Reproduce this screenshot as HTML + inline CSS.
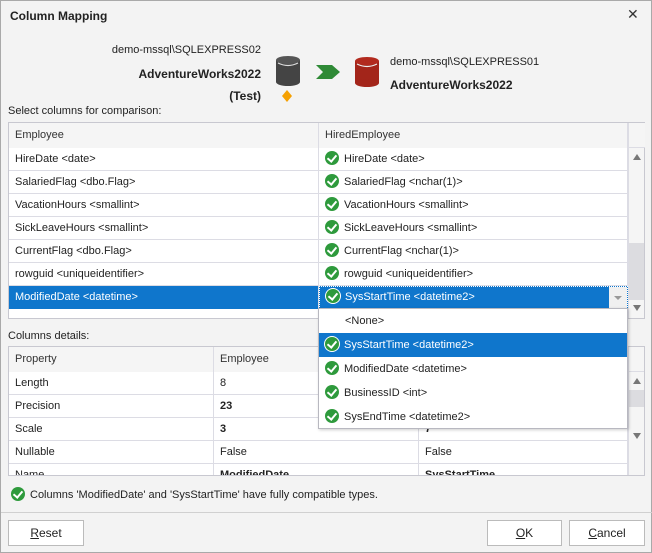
<!DOCTYPE html>
<html><head><style>
*{box-sizing:border-box;margin:0;padding:0}
body{width:652px;height:553px;background:#f0f0f0;font-family:"Liberation Sans",sans-serif;font-size:11px;color:#222;position:relative;overflow:hidden}
.win{position:absolute;left:0;top:0;width:652px;height:553px;border:1px solid #a9a9a9;background:#f3f3f3}
.a{position:absolute;white-space:nowrap}
.grid{position:absolute;background:#fff;border:1px solid #c8c8d0}
.row{position:absolute;left:0;height:23px;border-bottom:1px solid #dcdce4;width:100%}
.cell{position:absolute;top:0;height:23px;line-height:23px;padding-left:6px;border-right:1px solid #dcdce4;white-space:nowrap;overflow:hidden}
.hdr{background:#f5f5f5;height:25px;line-height:25px;color:#333}
.sel{background:#0f76cc;color:#fff}
.ck{display:inline-block;width:14px;height:14px;border-radius:50%;background:#2e9a3c;vertical-align:-3px;margin-right:5px;position:relative}
.ck:after{content:"";position:absolute;left:4px;top:2px;width:4px;height:7px;border:solid #fff;border-width:0 2px 2px 0;transform:rotate(40deg)}
.btn{position:absolute;height:26px;border:1px solid #bbb;background:#fff;text-align:center;line-height:24px;font-size:12px}
.sb{position:absolute;background:#f5f5f5}
.tri{position:absolute;width:0;height:0;border-left:4px solid transparent;border-right:4px solid transparent}
</style></head><body>
<div class="win">
<div class="a" style="left:9px;top:8px;font-weight:bold;font-size:12px">Column Mapping</div>
<div class="a" style="left:626px;top:5px;font-size:14px;color:#333">✕</div>

<div class="a" style="right:390px;top:43px">demo-mssql\SQLEXPRESS02</div>
<div class="a" style="right:390px;top:66px;font-weight:bold;font-size:12px">AdventureWorks2022</div>
<div class="a" style="right:390px;top:88px;font-weight:bold;font-size:12px">(Test)</div>
<svg class="a" style="left:274px;top:54px" width="26" height="32"><rect x="1" y="5" width="24" height="22" fill="#444"/><ellipse cx="13" cy="27" rx="12" ry="4" fill="#444"/><ellipse cx="13" cy="5" rx="12" ry="4" fill="#555"/><path d="M3 8Q13 13 23 8" stroke="#ddd" stroke-width="1.2" fill="none"/></svg>
<svg class="a" style="left:281px;top:89px" width="10" height="12"><path d="M5 0L10 6L5 12L0 6Z" fill="#f5a000"/></svg>
<svg class="a" style="left:315px;top:64px" width="24" height="14"><path d="M0 0H16L24 7L16 14H0L7 7Z" fill="#2f8a36"/></svg>
<svg class="a" style="left:353px;top:55px" width="26" height="32"><rect x="1" y="5" width="24" height="22" fill="#a3251a"/><ellipse cx="13" cy="27" rx="12" ry="4" fill="#a3251a"/><ellipse cx="13" cy="5" rx="12" ry="4" fill="#b22a1e"/><path d="M3 8Q13 13 23 8" stroke="#eee" stroke-width="1.2" fill="none"/></svg>
<div class="a" style="left:389px;top:55px">demo-mssql\SQLEXPRESS01</div>
<div class="a" style="left:389px;top:77px;font-weight:bold;font-size:12px">AdventureWorks2022</div>

<div class="a" style="left:7px;top:104px">Select columns for comparison:</div>
<div class="grid" style="left:7px;top:121px;width:637px;height:197px">
 <div class="row hdr" style="top:0"><div class="cell hdr" style="left:0;width:310px">Employee</div><div class="cell hdr" style="left:310px;width:309px">HiredEmployee</div></div>
 <div class="row" style="top:25px"><div class="cell" style="left:0;width:310px">HireDate &lt;date&gt;</div><div class="cell" style="left:310px;width:309px"><span class="ck"></span>HireDate &lt;date&gt;</div></div>
 <div class="row" style="top:48px"><div class="cell" style="left:0;width:310px">SalariedFlag &lt;dbo.Flag&gt;</div><div class="cell" style="left:310px;width:309px"><span class="ck"></span>SalariedFlag &lt;nchar(1)&gt;</div></div>
 <div class="row" style="top:71px"><div class="cell" style="left:0;width:310px">VacationHours &lt;smallint&gt;</div><div class="cell" style="left:310px;width:309px"><span class="ck"></span>VacationHours &lt;smallint&gt;</div></div>
 <div class="row" style="top:94px"><div class="cell" style="left:0;width:310px">SickLeaveHours &lt;smallint&gt;</div><div class="cell" style="left:310px;width:309px"><span class="ck"></span>SickLeaveHours &lt;smallint&gt;</div></div>
 <div class="row" style="top:117px"><div class="cell" style="left:0;width:310px">CurrentFlag &lt;dbo.Flag&gt;</div><div class="cell" style="left:310px;width:309px"><span class="ck"></span>CurrentFlag &lt;nchar(1)&gt;</div></div>
 <div class="row" style="top:140px"><div class="cell" style="left:0;width:310px">rowguid &lt;uniqueidentifier&gt;</div><div class="cell" style="left:310px;width:309px"><span class="ck"></span>rowguid &lt;uniqueidentifier&gt;</div></div>
 <div class="row" style="top:163px;border:0"><div class="cell sel" style="left:0;width:310px">ModifiedDate &lt;datetime&gt;</div><div class="cell sel" style="left:310px;width:309px;border:1px dotted #fff;line-height:21px"><span class="ck" style="box-shadow:0 0 0 1px #fff"></span>SysStartTime &lt;datetime2&gt;<div style="position:absolute;right:0;top:0;width:18px;height:21px;background:#f0f0f0"><div class="tri" style="left:5px;top:9px;border-top:4px solid #999"></div></div></div></div>
 <div class="sb" style="left:619px;top:0;width:16px;height:195px;border-left:1px solid #dcdce4"><div style="position:absolute;top:0;height:25px;width:16px;background:#f5f5f5;border-bottom:1px solid #dcdce4"></div><div class="tri" style="left:4px;top:31px;border-bottom:6px solid #777"></div><div style="position:absolute;top:120px;height:57px;width:15px;background:#dcdce0"></div><div class="tri" style="left:4px;top:182px;border-top:6px solid #777"></div></div>
</div>

<div class="a" style="left:7px;top:329px">Columns details:</div>
<div class="grid" style="left:7px;top:345px;width:637px;height:130px;overflow:hidden">
 <div class="row hdr" style="top:0"><div class="cell hdr" style="left:0;width:205px">Property</div><div class="cell hdr" style="left:205px;width:205px">Employee</div><div class="cell hdr" style="left:410px;width:209px"></div></div>
 <div class="row" style="top:25px"><div class="cell" style="left:0;width:205px">Length</div><div class="cell" style="left:205px;width:205px">8</div><div class="cell" style="left:410px;width:209px"></div></div>
 <div class="row" style="top:48px"><div class="cell" style="left:0;width:205px">Precision</div><div class="cell" style="left:205px;width:205px;font-weight:bold">23</div><div class="cell" style="left:410px;width:209px"></div></div>
 <div class="row" style="top:71px"><div class="cell" style="left:0;width:205px">Scale</div><div class="cell" style="left:205px;width:205px;font-weight:bold">3</div><div class="cell" style="left:410px;width:209px;font-weight:bold">7</div></div>
 <div class="row" style="top:94px"><div class="cell" style="left:0;width:205px">Nullable</div><div class="cell" style="left:205px;width:205px">False</div><div class="cell" style="left:410px;width:209px">False</div></div>
 <div class="row" style="top:117px"><div class="cell" style="left:0;width:205px">Name</div><div class="cell" style="left:205px;width:205px;font-weight:bold">ModifiedDate</div><div class="cell" style="left:410px;width:209px;font-weight:bold">SysStartTime</div></div>
 <div class="sb" style="left:619px;top:0;width:16px;height:130px;border-left:1px solid #dcdce4"><div style="position:absolute;top:0;height:25px;width:16px;border-bottom:1px solid #dcdce4"></div><div class="tri" style="left:4px;top:31px;border-bottom:6px solid #777"></div><div style="position:absolute;top:43px;height:17px;width:15px;background:#dcdce0"></div><div class="tri" style="left:4px;top:86px;border-top:6px solid #777"></div></div>
</div>

<div class="a" style="left:317px;top:307px;width:310px;height:121px;background:#fff;border:1px solid #b8b8c0;box-shadow:1px 1px 3px rgba(0,0,0,.2)">
 <div style="height:24px;line-height:24px;padding-left:26px">&lt;None&gt;</div>
 <div style="height:24px;line-height:24px;padding-left:6px;background:#0f76cc;color:#fff"><span class="ck" style="box-shadow:0 0 0 1px #fff"></span>SysStartTime &lt;datetime2&gt;</div>
 <div style="height:24px;line-height:24px;padding-left:6px"><span class="ck"></span>ModifiedDate &lt;datetime&gt;</div>
 <div style="height:24px;line-height:24px;padding-left:6px"><span class="ck"></span>BusinessID &lt;int&gt;</div>
 <div style="height:24px;line-height:24px;padding-left:6px"><span class="ck"></span>SysEndTime &lt;datetime2&gt;</div>
</div>

<div class="a" style="left:10px;top:486px"><span class="ck"></span>Columns 'ModifiedDate' and 'SysStartTime' have fully compatible types.</div>
<div class="a" style="left:0;top:511px;width:652px;height:1px;background:#d0d0d0"></div>
<div class="btn" style="left:7px;top:519px;width:76px"><u>R</u>eset</div>
<div class="btn" style="left:486px;top:519px;width:75px"><u>O</u>K</div>
<div class="btn" style="left:568px;top:519px;width:76px"><u>C</u>ancel</div>
</div>
</body></html>
